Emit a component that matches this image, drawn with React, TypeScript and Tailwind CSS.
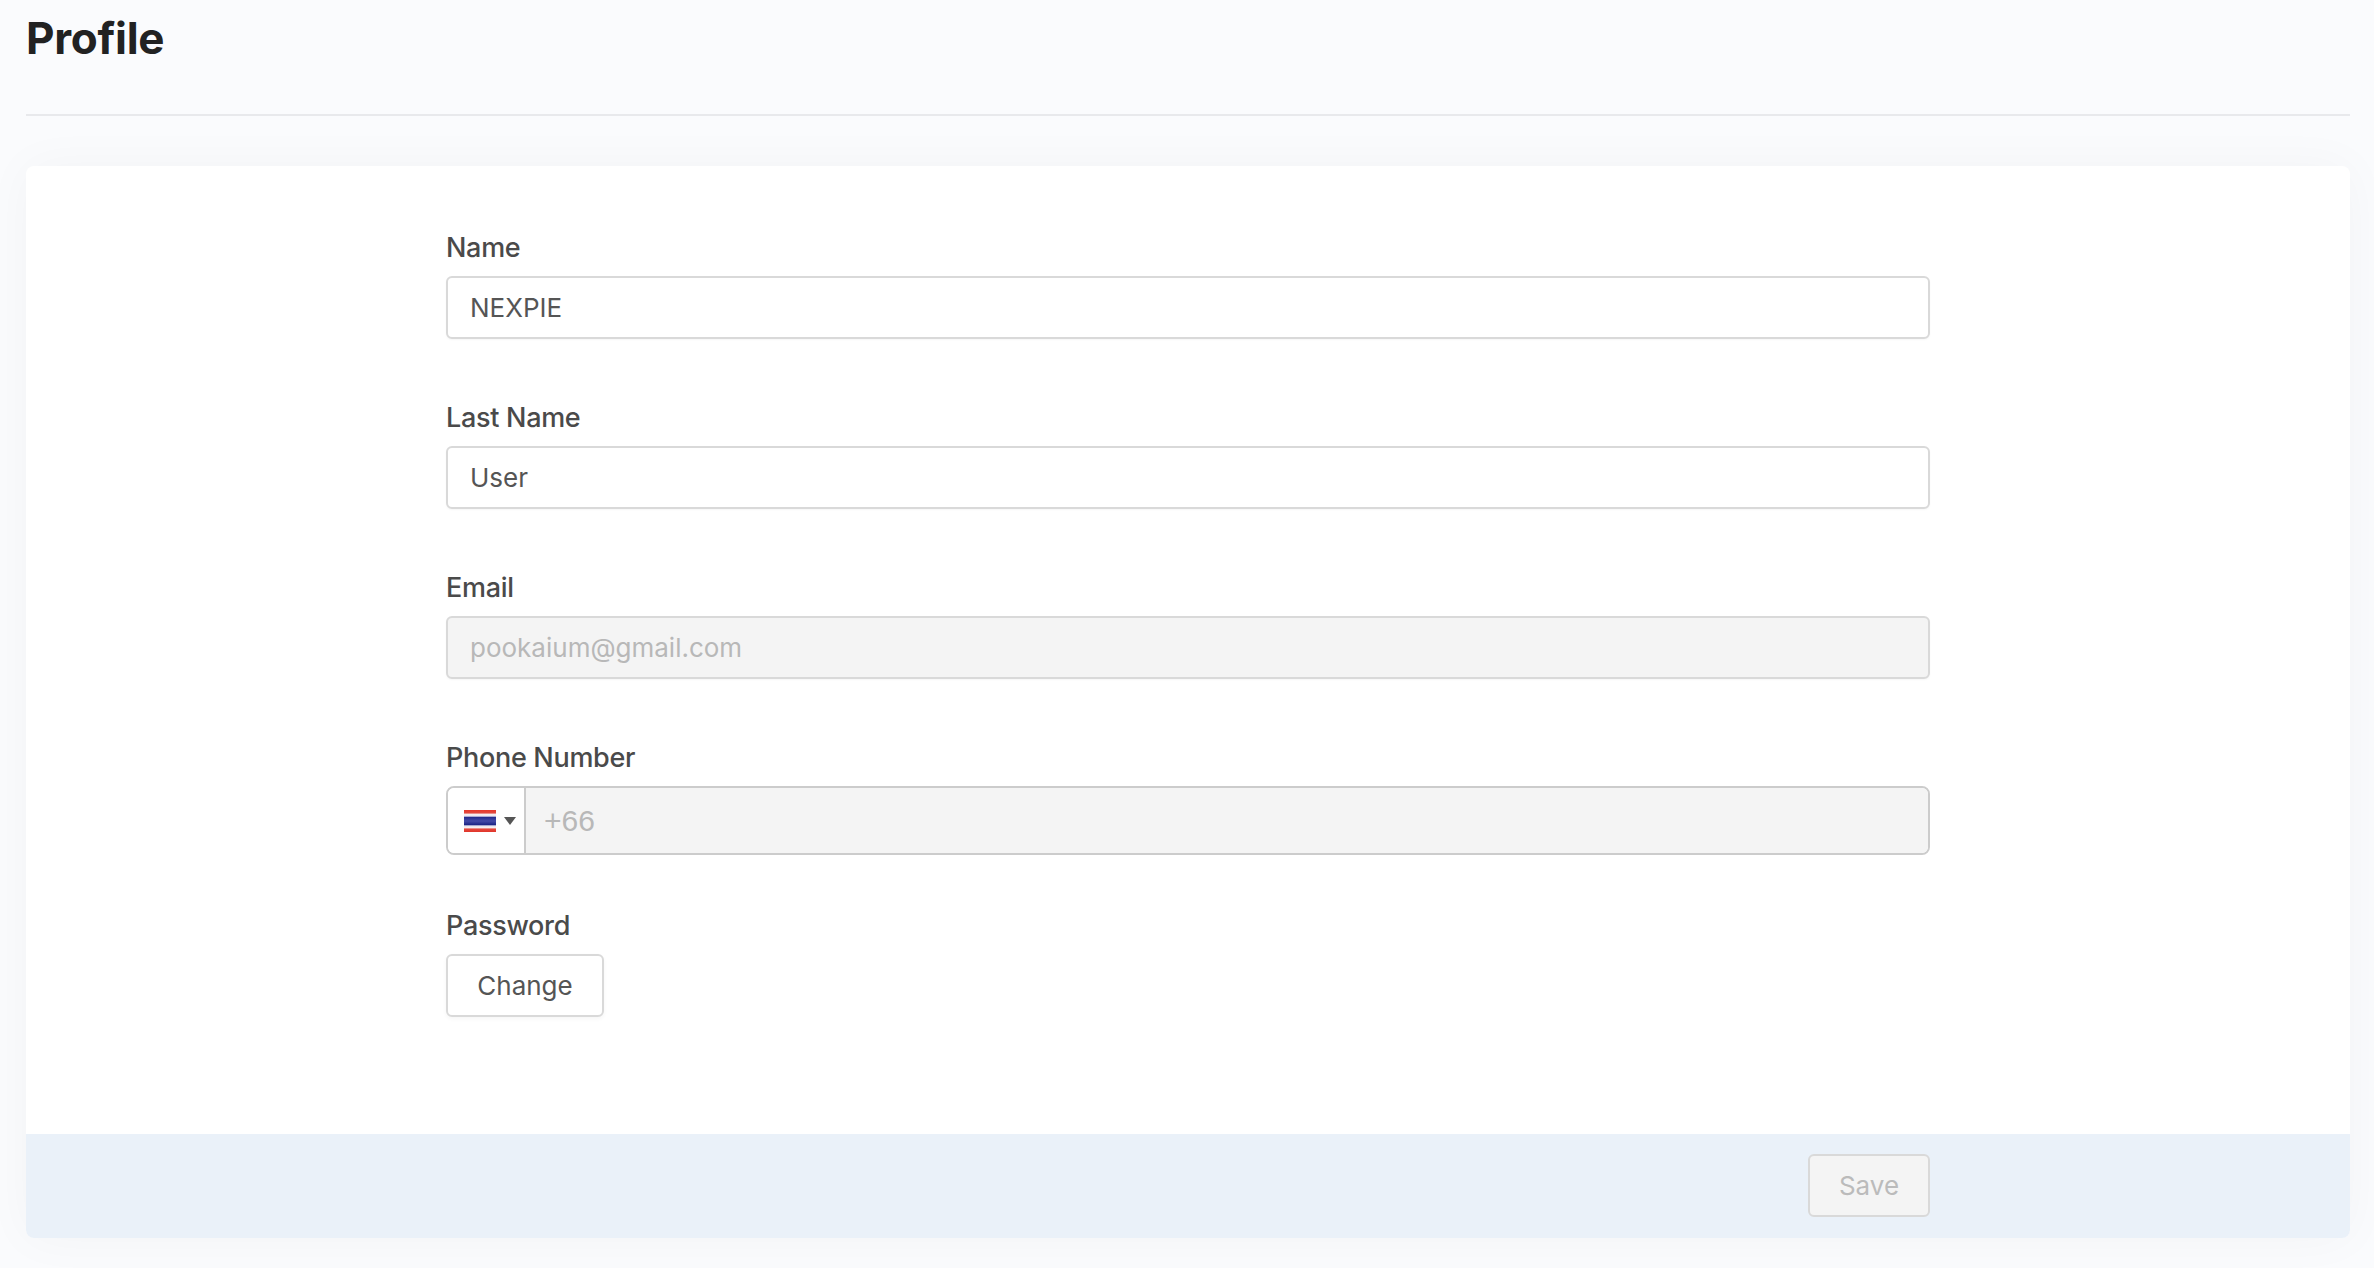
import React from 'react';

const ThaiFlag = () => (
  <svg width="32" height="22" viewBox="0 0 32 22" className="block shrink-0">
    <defs>
      {/* soft stops, the original flag is a blurry sprite */}
      <linearGradient id="thaiStripes" x1="0" y1="0" x2="0" y2="1">
        <stop offset="0%" stopColor="#e8392a" />
        <stop offset="13%" stopColor="#e2483e" />
        <stop offset="20%" stopColor="#f6eef0" />
        <stop offset="28%" stopColor="#e9e6f2" />
        <stop offset="33%" stopColor="#242c8c" />
        <stop offset="50%" stopColor="#444aa8" />
        <stop offset="67%" stopColor="#1e2686" />
        <stop offset="72%" stopColor="#e4e2f0" />
        <stop offset="80%" stopColor="#f8eff0" />
        <stop offset="87%" stopColor="#e5473c" />
        <stop offset="100%" stopColor="#e0352a" />
      </linearGradient>
    </defs>
    <rect width="32" height="22" fill="url(#thaiStripes)" />
  </svg>
);

const labelClass = 'block text-[27px] leading-[36px] font-medium text-[#4a4a4a] tracking-[-0.3px]';
const inputClass =
  'block w-full h-[63px] rounded-md border-2 border-[#d9d9d9] px-[22px] text-[26px] outline-none shadow-[0_1px_2px_rgba(0,0,0,0.04)]';

const Field: React.FC<{ label: string; value: string; disabled?: boolean; className?: string }> = ({
  label,
  value,
  disabled = false,
  className = '',
}) => (
  <div className={className}>
    <label className={labelClass}>{label}</label>
    <input
      readOnly
      value={value}
      className={`${inputClass} mt-[10px] ${disabled ? 'bg-[#f4f4f4] text-[#b8b8b8]' : 'bg-white text-[#555555]'}`}
    />
  </div>
);

export default function App() {
  return (
    <div className="min-h-[1268px] bg-[#fafbfd] pl-[26px] pr-[24px] font-['Inter',sans-serif] overflow-hidden">
      <div className="border-b-2 border-[#e8e9ec] h-[116px] pt-[13px]">
        <h1 className="text-[44px] leading-[50px] font-bold text-[#222222] tracking-[-0.3px]">Profile</h1>
      </div>

      <div className="mt-[50px] rounded-lg bg-white overflow-hidden shadow-[0_0_50px_rgba(20,30,50,0.035)]">
        <div className="h-[968px] flex justify-center pt-[64px]">
          <div className="w-[1484px]">
            <Field label="Name" value="NEXPIE" />
            <Field label="Last Name" value="User" className="mt-[61px]" />
            <Field label="Email" value="pookaium@gmail.com" disabled className="mt-[61px]" />

            <div className="mt-[61px]">
              <label className={labelClass}>Phone Number</label>
              <div className="mt-[10px] flex h-[69px] rounded-lg border-2 border-[#cccccc] overflow-hidden">
                <div className="w-[78px] shrink-0 bg-white border-r-2 border-[#cccccc] flex items-center pl-[16px]">
                  <ThaiFlag />
                  <div className="ml-[8px] w-0 h-0 border-x-[6px] border-x-transparent border-t-[8px] border-t-[#555555]" />
                </div>
                <input
                  readOnly
                  value="+66"
                  className="flex-1 bg-[#f4f4f4] px-[18px] text-[30px] text-[#b8b8b8] font-['Liberation_Sans',sans-serif] outline-none"
                />
              </div>
            </div>

            <div className="mt-[53px]">
              <label className={labelClass}>Password</label>
              <button className="block mt-[10px] w-[158px] h-[63px] rounded-md border-2 border-[#d9d9d9] bg-white text-[26px] text-[#555555] shadow-[0_2px_4px_rgba(0,0,0,0.04)]">
                Change
              </button>
            </div>
          </div>
        </div>

        <div className="h-[104px] bg-[#eaf1f9] flex justify-end pt-[20px] pr-[420px]">
          <button
            disabled
            className="w-[122px] h-[63px] rounded-md border-2 border-[#d9d9d9] bg-[#f4f4f4] text-[26px] text-[#bbbbbb]"
          >
            Save
          </button>
        </div>
      </div>
    </div>
  );
}
